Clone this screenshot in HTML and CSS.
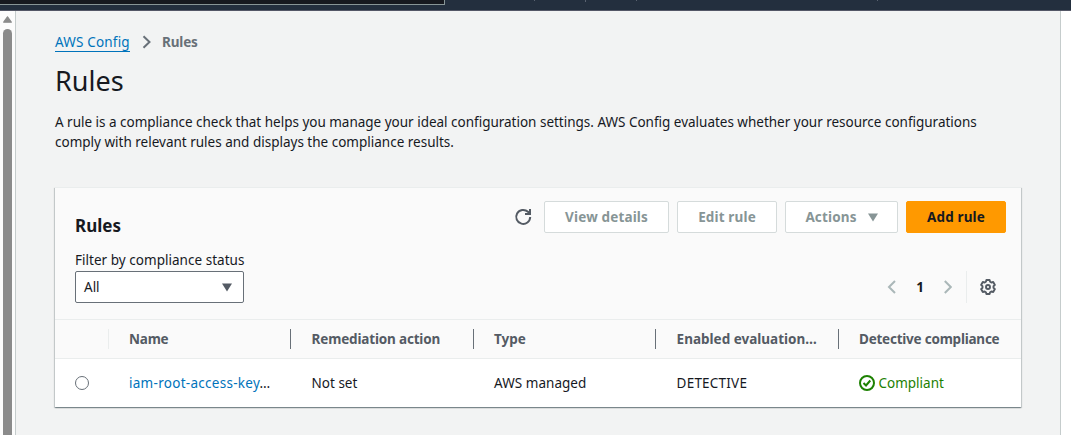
FILE: index.html
```html
<!DOCTYPE html>
<html lang="en">
<head>
<meta charset="utf-8">
<title>AWS Config - Rules</title>
<link rel="stylesheet" href="styles.css">
</head>
<body>
<header class="topbar"><div class="search"></div><div class="ticks"><i></i><i></i><i></i><i></i></div></header>
<div class="shell">
  <div class="scrollbar">
    <svg width="9" height="7" viewBox="0 0 9 7"><path d="M4.5 0.8 8.3 6.2H.7Z" fill="#8b8b8b" stroke="#8b8b8b" stroke-width="1.2" stroke-linejoin="round"/></svg>
    <div class="thumb"></div>
  </div>
  <main class="content">
    <nav class="crumbs">
      <a class="crumb-link">AWS Config</a>
      <svg width="10" height="14" viewBox="0 0 10 14"><path d="M1.5 1.2 7.5 7l-6 5.8" fill="none" stroke="#687078" stroke-width="2"/></svg>
      <span class="crumb-current">Rules</span>
    </nav>
    <h1 class="title">Rules</h1>
    <p class="intro"><span class="line one">A rule is a compliance check that helps you manage your ideal configuration settings. AWS Config evaluates whether your resource configurations</span><span class="line two">comply with relevant rules and displays the compliance results.</span></p>
    <section class="card">
      <div class="card-top">
        <h2 class="card-title">Rules</h2>
        <div class="actions">
          <svg class="refresh" width="18" height="18" viewBox="0 0 18 18" fill="none" stroke="#545b64" stroke-width="2"><path d="M16.2 9a7 7 0 1 1-2.2-5.2l2 2.1"/><path d="M16 1v5h-5"/></svg>
          <button class="btn view"><span>View details</span></button>
          <button class="btn edit"><span>Edit rule</span></button>
          <button class="btn menu"><span>Actions</span><svg width="10" height="9" viewBox="0 0 10 9"><path d="M0 .5h10L5 8.5Z" fill="#879596"/></svg></button>
          <button class="btn primary"><span>Add rule</span></button>
        </div>
      </div>
      <div class="filters">
        <div class="filter">
          <label class="filter-label">Filter by compliance status</label>
          <div class="select"><span>All</span><svg width="10" height="9" viewBox="0 0 10 9"><path d="M0 .5h10L5 8.5Z" fill="#545b64"/></svg></div>
        </div>
        <div class="pager">
          <svg width="9" height="14" viewBox="0 0 9 14"><path d="M8 1 2 7l6 6" fill="none" stroke="#aab7b8" stroke-width="2"/></svg>
          <span class="page">1</span>
          <svg width="9" height="14" viewBox="0 0 9 14"><path d="m1.800 1 6 6-6 6" fill="none" stroke="#aab7b8" stroke-width="2"/></svg>
          <div class="prefs"><svg width="16" height="16" viewBox="0 0 16 16" fill="none" stroke="#545b64" stroke-width="1.9" stroke-linejoin="round"><path d="M6.4 1h3.2l.5 1.8 1.2.7 1.9-.5 1.7 2.9L13.500 7.200v1.600l1.400 1.300-1.700 2.900-1.900-.5-1.200.7-.5 1.800H6.400l-.5-1.800-1.200-.7-1.900.5-1.700-2.900 1.400-1.300V7.200L1.100 5.900 2.800 3l1.900.5 1.200-.7Z"/><circle cx="8" cy="8" r="2"/></svg></div>
        </div>
      </div>
      <div class="row head">
        <div class="cell pick"></div>
        <div class="cell"><span class="h-name">Name</span></div>
        <div class="cell"><span class="h-rem">Remediation action</span></div>
        <div class="cell"><span class="h-type">Type</span></div>
        <div class="cell"><span class="h-mode">Enabled evaluation…</span></div>
        <div class="cell"><span class="h-comp">Detective compliance</span></div>
      </div>
      <div class="row body">
        <div class="cell pick"><span class="radio"></span></div>
        <div class="cell"><span class="b-name"><a>iam-root-access-key</a>…</span></div>
        <div class="cell"><span class="b-rem">Not set</span></div>
        <div class="cell"><span class="b-type">AWS managed</span></div>
        <div class="cell"><span class="b-mode">DETECTIVE</span></div>
        <div class="cell status"><svg width="16" height="16" viewBox="0 0 16 16" fill="none" stroke="#1d8102" stroke-width="2"><circle cx="8" cy="8" r="7"/><path d="m4.500 8 2.500 2.500 4.300-5"/></svg><span class="b-comp">Compliant</span></div>
      </div>
    </section>
  </main>
  <div class="rail"></div>
</div>
</body>
</html>
```
FILE: styles.css
```css
* { box-sizing: border-box; }
body { margin: 0; width: 1071px; height: 435px; overflow: hidden; background: #fff; color: #16191f; font: 13.5px/20px "Noto Sans", "Open Sans", sans-serif; white-space: nowrap; }
.topbar { height: 11px; display: flex; background: #232f3e; border-bottom: 1px solid #545766; }
.search { width: 445px; height: 5px; background: #16191f; border: solid #879596; border-width: 0 1px 1px 0; }
.ticks { display: flex; gap: 50px; padding-left: 89px; }
.ticks i { width: 1px; height: 1px; background: #596270; }
.ticks i:nth-child(2) { height: 2px; }
.ticks i:nth-child(4) { margin-left: 190px; }
.shell { display: flex; height: 424px; }
.scrollbar { width: 15px; padding: 5px 0 0 3px; display: flex; flex-direction: column; gap: 6px; background: #fcfcfc; }
.scrollbar svg { flex: none; display: block; }
.thumb { width: 9px; flex: 1; background: #8b8b8b; border-radius: 5px 5px 0 0; }
.content { width: 1046px; padding: 21px 39px 0; border: solid #c5cccc; border-width: 0 1px; background: #f2f3f3; }
.rail { flex: 1; background: #fff; }
.crumbs { display: flex; align-items: center; height: 20px; }
.crumb-link { width: 75px; height: 19px; margin-top: 1px; line-height: 18px; letter-spacing: .18px; color: #0073bb; border-bottom: 1px solid #0073bb; }
.crumbs svg { margin: 0 10px 0 12px; }
.crumb-current { color: #687078; font-weight: 700; letter-spacing: -.15px; }
.title { margin: 11px 0 0; font-size: 27px; font-weight: 400; line-height: 36px; }
.intro { margin: 13px 0 0; }
.line { display: block; }
.one { letter-spacing: -.01px; }
.card { width: 966px; height: 220px; margin-top: 35px; background: #fff; border-top: 1px solid #eaeded; box-shadow: 0 1px 1px 0 rgba(0,28,36,.3), 1px 1px 1px 0 rgba(0,28,36,.15), -1px 1px 1px 0 rgba(0,28,36,.15); }
.card-top { display: flex; justify-content: space-between; height: 62px; padding: 13px 15px 0 20px; background: #fafafa; }
.card-title { margin: 14px 0 0; font-size: 17px; line-height: 22px; }
.actions { display: flex; gap: 8px; }
.refresh { margin: 7px 4px 0 0; }
.btn { height: 32px; padding: 0; display: flex; align-items: center; justify-content: center; background: #fff; border: 1px solid #d5dbdb; border-radius: 2px; color: #879596; font: 700 13.5px/20px "Noto Sans", "Open Sans", sans-serif; letter-spacing: .15px; }
.view { width: 125px; }
.edit { width: 100px; }
.menu { width: 113px; gap: 11px; }
.primary { width: 100px; background: #ff9900; border-color: #ff9900; color: #16191f; }
.filters { display: flex; justify-content: space-between; height: 69px; padding: 0 25px 0 20px; background: #fafafa; }
.filter-label { display: block; height: 21px; letter-spacing: .03px; }
.select { display: flex; align-items: center; justify-content: space-between; width: 169px; height: 32px; padding: 0 11px 0 8px; background: #fff; border: 1px solid #687078; border-radius: 2px; }
.pager { display: flex; align-items: center; height: 32px; margin-top: 21px; }
.page { width: 47px; padding-left: 1px; text-align: center; font-weight: 700; }
.prefs { height: 32px; margin-left: 14px; padding-left: 13px; display: flex; align-items: center; border-left: 1px solid #eaeded; }
.row { display: grid; grid-template-columns: 53px 182px 183px 182px 183px 183px; align-items: center; }
.head { height: 40px; background: #fafafa; border: solid #eaeded; border-width: 1px 0; color: #545b64; font-weight: 700; }
.head .cell { height: 20px; padding-left: 20px; border-left: 1px solid #687078; }
.head .cell:nth-child(1) { border: 0; }
.head .cell:nth-child(2) { border-color: #eaeded; }
.head .cell:nth-child(3), .head .cell:nth-child(5) { padding-left: 20.600px; }
.h-name { letter-spacing: -.2px; }
.h-rem { letter-spacing: -.17px; }
.h-comp { letter-spacing: -.23px; }
.body { height: 48px; }
.body .cell { padding-left: 21px; }
.body .cell:nth-child(3), .body .cell:nth-child(5) { padding-left: 21.600px; }
.body .pick { padding-left: 20px; }
.radio { display: block; width: 14px; height: 14px; border: 1px solid #687078; border-radius: 50%; background: #fff; }
.body a { color: #0073bb; }
.b-name { letter-spacing: .28px; }
.b-type { letter-spacing: .04px; }
.b-mode { letter-spacing: .22px; }
.status { display: flex; align-items: center; gap: 3.5px; color: #1d8102; }
```
